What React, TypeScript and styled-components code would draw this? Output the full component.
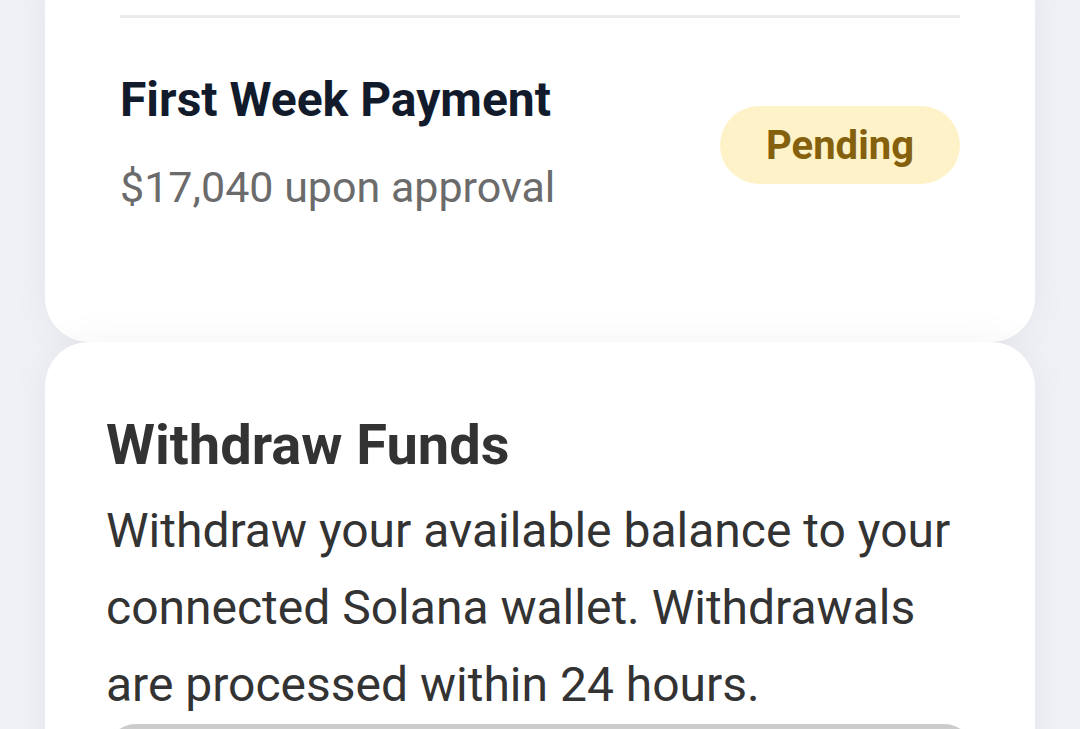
import React from "react";
import styled, { createGlobalStyle } from "styled-components";

const GlobalStyle = createGlobalStyle`
  html, body {
    margin: 0;
    padding: 0;
    background: #f0f1f5;
    font-family: Roboto, "Noto Sans", "Liberation Sans", sans-serif;
    overflow: hidden;
  }
`;

const Page = styled.div`
  display: flex;
  flex-direction: column;
  padding: 0 45px;
  margin-top: -40px;
`;

const Card = styled.section<{ $padTop: number; $padX: number; $padBottom: number }>`
  background: #ffffff;
  border-radius: 44px;
  box-shadow: 0 0 40px rgba(20, 30, 60, 0.05);
  padding: ${(p) => `${p.$padTop}px ${p.$padX}px ${p.$padBottom}px`};
  position: relative;
`;

const Divider = styled.div`
  height: 3px;
  background: #ebebeb;
`;

const PaymentRow = styled.div`
  display: flex;
  align-items: center;
  justify-content: space-between;
  margin-top: 54px;
`;

const PaymentInfo = styled.div`
  display: flex;
  flex-direction: column;
  gap: 33px;
`;

const PaymentTitle = styled.div`
  font-size: 48px;
  line-height: 56px;
  font-weight: 700;
  color: #111b2c;
`;

const PaymentSub = styled.div`
  font-size: 43px;
  line-height: 52px;
  color: #6b6b6b;
`;

const Pill = styled.div`
  height: 78px;
  padding: 0 46px;
  border-radius: 39px;
  background: #fef3c8;
  color: #85600d;
  font-size: 40px;
  font-weight: 700;
  display: flex;
  align-items: center;
  margin-top: 5px;
`;

const SectionTitle = styled.h2`
  margin: 0;
  font-size: 56px;
  line-height: 64px;
  font-weight: 700;
  color: #333333;
`;

const SectionText = styled.p`
  margin: 15px 0 0;
  font-size: 48px;
  line-height: 77px;
  color: #333333;
`;

const WithdrawButton = styled.button`
  display: block;
  width: 100%;
  height: 120px;
  margin-top: 1px;
  border: none;
  border-radius: 30px;
  background: #cccccc;
`;

export default function App() {
  return (
    <>
      <GlobalStyle />
      <Page>
        <Card $padTop={55} $padX={75} $padBottom={129}>
          <Divider />
          <PaymentRow>
            <PaymentInfo>
              <PaymentTitle>First Week Payment</PaymentTitle>
              <PaymentSub>$17,040 upon approval</PaymentSub>
            </PaymentInfo>
            <Pill>Pending</Pill>
          </PaymentRow>
        </Card>
        <Card $padTop={71} $padX={61} $padBottom={60}>
          <SectionTitle>Withdraw Funds</SectionTitle>
          <SectionText>
            Withdraw your available balance to your connected Solana wallet.
            Withdrawals are processed within 24 hours.
          </SectionText>
          <WithdrawButton aria-label="Withdraw" />
        </Card>
      </Page>
    </>
  );
}
